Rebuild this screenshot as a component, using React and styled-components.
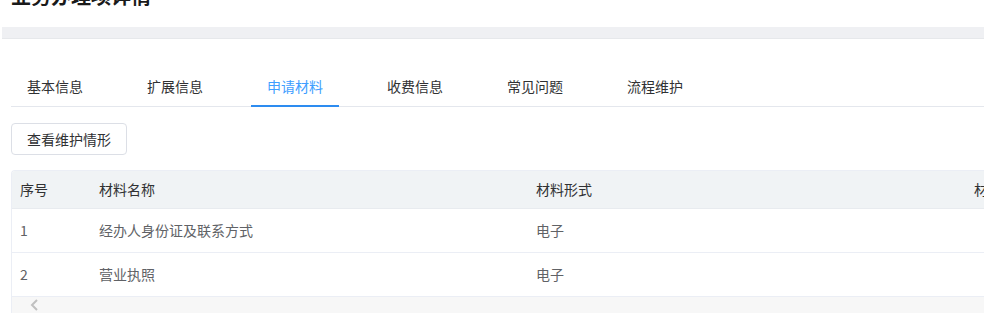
import React, { useState } from 'react';
import styled, { createGlobalStyle } from 'styled-components';

const GlobalStyle = createGlobalStyle`
  html, body {
    margin: 0;
    padding: 0;
    background: #fff;
    overflow: hidden;
  }
  body {
    font-family: "Noto Sans CJK SC", "Liberation Sans", sans-serif;
    font-size: 14px;
    color: #606266;
  }
  * { box-sizing: border-box; }
`

const Page = styled.div`
  width: 986px;
  height: 316px;
  padding: 0 2px;
  overflow: hidden;
`

const Title = styled.h1`
  margin: -18px 0 0 9px;
  height: 28px;
  line-height: 28px;
  font-size: 20px;
  font-weight: bold;
  color: #1a1a1a;
`

const Divider = styled.div`
  margin-top: 17px;
  width: 982px;
  height: 12px;
  background: #eff0f3;
  border-bottom: 1px solid #e6e8eb;
`

const Content = styled.div`
  padding-left: 9px;
  width: 982px;
`

const TabNav = styled.div`
  display: flex;
  gap: 32px;
  margin-top: 27px;
  height: 41px;
  border-bottom: 1px solid #e4e7ed;
`

const Tab = styled.div`
  height: 41px;
  line-height: 40px;
  padding: 0 16px;
  font-size: 14px;
  color: ${p => (p.$active ? '#409eff' : '#303133')};
  border-bottom: 2px solid ${p => (p.$active ? '#2d8cf0' : 'transparent')};
  margin-bottom: -1px;
  cursor: pointer;
`

const Button = styled.button`
  margin-top: 16px;
  height: 32px;
  padding: 0 15px;
  font-family: inherit;
  font-size: 14px;
  color: #303133;
  background: #fff;
  border: 1px solid #dcdfe6;
  border-radius: 4px;
`

const TableWrap = styled.div`
  margin-top: 15px;
  width: 973px;
  overflow: hidden;
  border-left: 1px solid #ebeef5;
  border-top: 1px solid #ebeef5;
  border-top-left-radius: 4px;
`

const Grid = styled.div`
  display: grid;
  grid-template-columns: 79px 437px 438px 200px;
  width: 1154px;
`

const HeadCell = styled.div`
  height: 38px;
  line-height: 37px;
  padding-left: 8px;
  background: #f0f3f5;
  color: #303133;
  border-bottom: 1px solid #e8ebef;
  white-space: nowrap;
`

const Cell = styled.div`
  height: 44px;
  line-height: 43px;
  padding-left: 8px;
  color: #606266;
  border-bottom: 1px solid #ebeef5;
  white-space: nowrap;
`

const ScrollBar = styled.div`
  height: 16px;
  background: #f7f7f7;
  display: flex;
  align-items: center;
  padding-left: 18px;
`

const columns = ['序号', '材料名称', '材料形式', '材料来源'];
const rows = [
  ['1', '经办人身份证及联系方式', '电子', ''],
  ['2', '营业执照', '电子', ''],
];
const tabs = ['基本信息', '扩展信息', '申请材料', '收费信息', '常见问题', '流程维护'];

export default function App() {
  const [active, setActive] = useState(2);
  return (
    <Page>
      <GlobalStyle />
      <Title>业务办理项详情</Title>
      <Divider />
      <Content>
        <TabNav>
          {tabs.map((t, i) => (
            <Tab key={t} $active={i === active} onClick={() => setActive(i)}>{t}</Tab>
          ))}
        </TabNav>
        <Button>查看维护情形</Button>
        <TableWrap>
          <Grid>
            {columns.map(c => <HeadCell key={c}>{c}</HeadCell>)}
            {rows.map(r => r.map((v, j) => <Cell key={r[0] + j}>{v}</Cell>))}
          </Grid>
          <ScrollBar>
            <svg width="8" height="12" viewBox="0 0 8 12">
              <path d="M7 1 L2 6 L7 11" fill="none" stroke="#c0c0c0" strokeWidth="2" />
            </svg>
          </ScrollBar>
        </TableWrap>
      </Content>
    </Page>
  );
}
